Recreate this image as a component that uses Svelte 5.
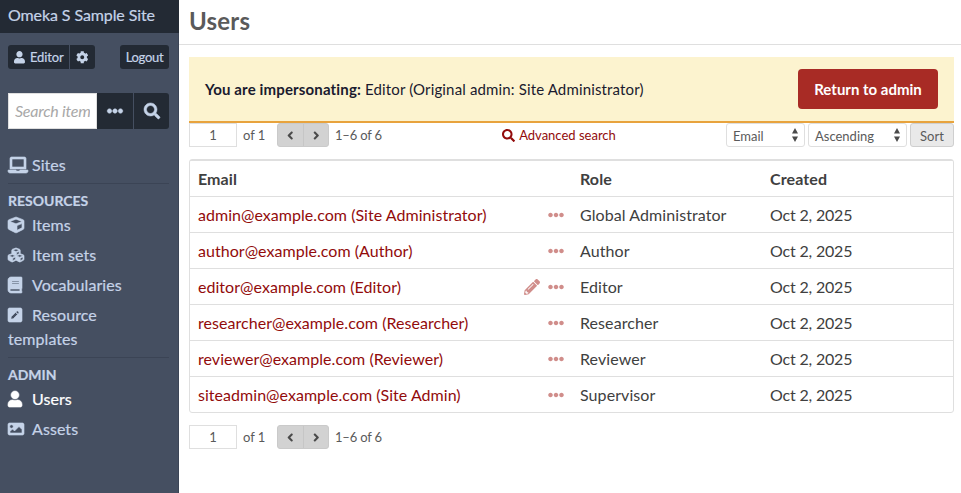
<script>
  const icons = {
    user: [448, 'M224 256c70.7 0 128-57.3 128-128S294.7 0 224 0 96 57.3 96 128s57.3 128 128 128zm89.6 32h-16.7c-22.2 10.2-46.9 16-72.9 16s-50.6-5.8-72.9-16h-16.7C60.2 288 0 348.2 0 422.4V464c0 26.5 21.5 48 48 48h352c26.5 0 48-21.5 48-48v-41.6c0-74.2-60.2-134.4-134.4-134.4z'],
    cog: [512, 'M487.4 315.7l-42.6-24.6c4.3-23.2 4.3-47 0-70.2l42.6-24.6c4.9-2.8 7.1-8.6 5.5-14-11.1-35.6-30-67.8-54.7-94.6-3.8-4.1-10-5.1-14.8-2.3L380.8 110c-17.9-15.4-38.5-27.3-60.8-35.1V25.8c0-5.6-3.9-10.5-9.4-11.7-36.7-8.2-74.3-7.8-109.2 0-5.5 1.2-9.4 6.1-9.4 11.7V75c-22.2 7.9-42.8 19.8-60.8 35.1L88.7 85.5c-4.9-2.8-11-1.9-14.8 2.3-24.7 26.7-43.6 58.9-54.7 94.6-1.7 5.4.6 11.2 5.5 14L67.3 221c-4.3 23.2-4.3 47 0 70.2l-42.6 24.6c-4.9 2.8-7.1 8.6-5.5 14 11.1 35.6 30 67.8 54.7 94.6 3.8 4.1 10 5.1 14.8 2.3l42.6-24.6c17.9 15.4 38.5 27.3 60.8 35.1v49.2c0 5.6 3.9 10.5 9.4 11.7 36.7 8.2 74.3 7.8 109.2 0 5.5-1.2 9.4-6.1 9.4-11.7v-49.2c22.2-7.9 42.8-19.8 60.8-35.1l42.6 24.6c4.9 2.8 11 1.9 14.8-2.3 24.7-26.7 43.6-58.9 54.7-94.6 1.5-5.5-.7-11.3-5.6-14.1zM256 336c-44.1 0-80-35.9-80-80s35.9-80 80-80 80 35.9 80 80-35.9 80-80 80z'],
    search: [512, 'M505 442.7L405.3 343c-4.5-4.5-10.6-7-17-7H372c27.6-35.3 44-79.7 44-128C416 93.1 322.9 0 208 0S0 93.1 0 208s93.1 208 208 208c48.3 0 92.7-16.4 128-44v16.3c0 6.4 2.5 12.5 7 17l99.7 99.7c9.4 9.4 24.6 9.4 33.9 0l28.3-28.3c9.4-9.4 9.4-24.6.1-34zM208 336c-70.7 0-128-57.2-128-128 0-70.7 57.2-128 128-128 70.7 0 128 57.2 128 128 0 70.7-57.2 128-128 128z'],
    dots: [512, 'M328 256c0 39.8-32.2 72-72 72s-72-32.2-72-72 32.2-72 72-72 72 32.2 72 72zm104-72c-39.8 0-72 32.2-72 72s32.2 72 72 72 72-32.2 72-72-32.2-72-72-72zm-352 0c-39.8 0-72 32.2-72 72s32.2 72 72 72 72-32.2 72-72-32.2-72-72-72z'],
    laptop: [640, 'M624 416H381.54c-.74 19.81-14.71 32-32.74 32H288c-18.69 0-33.02-17.47-32.77-32H16c-8.8 0-16 7.2-16 16v16c0 35.2 28.8 64 64 64h512c35.2 0 64-28.8 64-64v-16c0-8.8-7.2-16-16-16zM576 48c0-26.4-21.6-48-48-48H112C85.6 0 64 21.6 64 48v336h512V48zm-64 272H128V64h384v256z'],
    cube: [512, 'M239.1 6.3l-208 78c-18.7 7-31.1 25-31.1 45v225.1c0 18.2 10.3 34.8 26.5 42.9l208 104c13.5 6.8 29.4 6.8 42.9 0l208-104c16.3-8.1 26.5-24.8 26.5-42.9V129.3c0-20-12.4-37.9-31.1-44.9l-208-78C262 2.2 250 2.2 239.1 6.3zM256 68.4l192 72v1.1l-192 78-192-78v-1.1l192-72zm32 356V275.5l160-65v133.9l-160 80z'],
    cubes: [512, 'M488.6 250.2L392 214V105.5c0-15-9.3-28.4-23.4-33.7l-100-37.5c-8.1-3.1-17.1-3.1-25.3 0l-100 37.5c-14.1 5.3-23.4 18.7-23.4 33.7V214l-96.6 36.2C9.3 255.5 0 268.9 0 283.9V394c0 13.6 7.7 26.1 19.9 32.2l100 50c10.1 5.1 22.1 5.1 32.2 0l103.9-52 103.9 52c10.1 5.1 22.1 5.1 32.2 0l100-50c12.2-6.1 19.9-18.6 19.9-32.2V283.9c0-15-9.3-28.4-23.4-33.7zM358 214.8l-85 31.9v-68.2l85-37v73.3zM154 104.1l102-38.2 102 38.2v.6l-102 41.4-102-41.4v-.6zm84 291.1l-85 42.5v-79.1l85-38.8v75.4zm0-112l-102 41.4-102-41.4v-.6l102-38.2 102 38.2v.6zm240 112l-85 42.5v-79.1l85-38.8v75.4zm0-112l-102 41.4-102-41.4v-.6l102-38.2 102 38.2v.6z'],
    book: [448, 'M448 360V24c0-13.3-10.7-24-24-24H96C43 0 0 43 0 96v320c0 53 43 96 96 96h328c13.3 0 24-10.7 24-24v-16c0-7.5-3.5-14.3-8.9-18.7-4.2-15.4-4.2-59.3 0-74.7 5.4-4.3 8.9-11.1 8.9-18.6zM128 134c0-3.3 2.7-6 6-6h212c3.3 0 6 2.7 6 6v20c0 3.3-2.7 6-6 6H134c-3.3 0-6-2.7-6-6v-20zm0 64c0-3.3 2.7-6 6-6h212c3.3 0 6 2.7 6 6v20c0 3.3-2.7 6-6 6H134c-3.3 0-6-2.7-6-6v-20zm253.4 250H96c-17.7 0-32-14.3-32-32 0-17.6 14.4-32 32-32h285.4c-1.9 17.1-1.9 46.9 0 64z'],
    penSquare: [448, 'M400 480H48c-26.5 0-48-21.5-48-48V80c0-26.5 21.5-48 48-48h352c26.5 0 48 21.5 48 48v352c0 26.5-21.5 48-48 48zM238.1 177.9L102.4 313.6l-6.3 57.1c-.8 7.6 5.6 14.1 13.3 13.3l57.1-6.3L302.2 242c2.3-2.3 2.3-6.1 0-8.5L246.7 178c-2.5-2.4-6.3-2.4-8.6-.1zM345 165.1L314.9 135c-9.4-9.4-24.6-9.4-33.9 0l-23.1 23.1c-2.3 2.3-2.3 6.1 0 8.5l55.5 55.5c2.3 2.3 6.1 2.3 8.5 0L345 199c9.3-9.3 9.3-24.5 0-33.9z'],
    image: [512, 'M464 448H48c-26.51 0-48-21.49-48-48V112c0-26.51 21.49-48 48-48h416c26.51 0 48 21.49 48 48v288c0 26.51-21.49 48-48 48zM112 120c-30.928 0-56 25.072-56 56s25.072 56 56 56 56-25.072 56-56-25.072-56-56-56zM64 384h384V272l-87.515-87.515c-4.686-4.686-12.284-4.686-16.971 0L208 320l-55.515-55.515c-4.686-4.686-12.284-4.686-16.971 0L64 336v48z'],
    pencil: [512, 'M497.9 142.1l-46.1 46.1c-4.7 4.7-12.3 4.7-17 0l-111-111c-4.7-4.7-4.7-12.3 0-17l46.1-46.1c18.7-18.7 49.1-18.7 67.9 0l60.1 60.1c18.8 18.7 18.8 49.1 0 67.9zM284.2 99.8L21.6 362.4.4 483.9c-2.9 16.4 11.4 30.6 27.8 27.8l121.5-21.3 262.6-262.6c4.7-4.7 4.7-12.3 0-17l-111-111c-4.8-4.7-12.4-4.7-17.1 0zM124.1 339.9c-5.5-5.5-5.5-14.3 0-19.8l154-154c5.5-5.5 14.3-5.5 19.8 0s5.5 14.3 0 19.8l-154 154c-5.5 5.5-14.3 5.5-19.8 0zM88 424h48v36.3l-64.5 11.3-31.1-31.1L51.7 376H88v48z'],
    left: [256, 'M31.7 239l136-136c9.4-9.4 24.6-9.4 33.9 0l22.6 22.6c9.4 9.4 9.4 24.6 0 33.9L127.9 256l96.4 96.4c9.4 9.4 9.4 24.6 0 33.9L201.7 409c-9.4 9.4-24.6 9.4-33.9 0l-136-136c-9.5-9.4-9.5-24.6-.1-34z'],
    right: [256, 'M224.3 273l-136 136c-9.4 9.4-24.6 9.4-33.9 0l-22.6-22.6c-9.4-9.4-9.4-24.6 0-33.9l96.4-96.4-96.4-96.4c-9.4-9.4-9.4-24.6 0-33.9L54.3 103c9.4-9.4 24.6-9.4 33.9 0l136 136c9.5 9.4 9.5 24.6.1 34z'],
  };

  const resources = [
    ['cube', 'Items'],
    ['cubes', 'Item sets'],
    ['book', 'Vocabularies'],
    ['penSquare', 'Resource templates'],
  ];

  const users = [
    ['admin@example.com (Site Administrator)', 'Global Administrator', false],
    ['author@example.com (Author)', 'Author', false],
    ['editor@example.com (Editor)', 'Editor', true],
    ['researcher@example.com (Researcher)', 'Researcher', false],
    ['reviewer@example.com (Reviewer)', 'Reviewer', false],
    ['siteadmin@example.com (Site Admin)', 'Supervisor', false],
  ];
</script>

{#snippet icon(name)}
  <svg class="icon" viewBox="0 0 {icons[name][0]} 512" style:width="{icons[name][0] / 512}em" aria-hidden="true"><path d={icons[name][1]} /></svg>
{/snippet}

{#snippet link(name, label, active)}
  <a class="nav-link" class:active href="#/"><span class="nav-icon">{@render icon(name)}</span>{label}</a>
{/snippet}

{#snippet pagination()}
  <div class="pagination">
    <input class="page" type="text" value="1" aria-label="Page" />
    <span class="of">of 1</span>
    <span class="arrows">
      <span>{@render icon('left')}</span>
      <span>{@render icon('right')}</span>
    </span>
    <span class="count">1–6 of 6</span>
  </div>
{/snippet}

{#snippet select(label, cls)}
  <span class="select {cls}">{label}
    <svg width="6" height="14" viewBox="0 0 6 14" aria-hidden="true"><path d="M3 0L6 5.4H0zM3 14L0 8.6H6z" /></svg>
  </span>
{/snippet}

<div class="app">
  <aside>
    <div class="site">Omeka S Sample Site</div>
    <div class="account">
      <a class="dark who" href="#/">{@render icon('user')}Editor</a>
      <a class="dark gear" href="#/">{@render icon('cog')}</a>
      <a class="dark logout" href="#/">Logout</a>
    </div>
    <form class="search">
      <input type="text" placeholder="Search items" aria-label="Search items" />
      <button type="button" class="more" aria-label="Options">{@render icon('dots')}</button>
      <button type="button" class="go" aria-label="Search">{@render icon('search')}</button>
    </form>
    <nav>
      <div class="group">{@render link('laptop', 'Sites', false)}</div>
      <div class="group">
        <h4>RESOURCES</h4>
        {#each resources as [name, label]}{@render link(name, label, false)}{/each}
      </div>
      <div class="group">
        <h4>ADMIN</h4>
        {@render link('user', 'Users', true)}
        {@render link('image', 'Assets', false)}
      </div>
    </nav>
  </aside>

  <main>
    <h1>Users</h1>
    <div class="content">
      <div class="banner">
        <span><b>You are impersonating:</b> Editor (Original admin: Site Administrator)</span>
        <a class="return" href="#/">Return to admin</a>
      </div>
      <div class="controls">
        {@render pagination()}
        <a class="advanced" href="#/">{@render icon('search')}Advanced search</a>
        <div class="sorting">
          {@render select('Email', 'by')}
          {@render select('Ascending', 'order')}
          <button type="button">Sort</button>
        </div>
      </div>
      <div class="table">
        <div class="row head"><span>Email</span><span>Role</span><span>Created</span></div>
        {#each users as [email, role, editable]}
          <div class="row">
            <span class="email">
              <a href="#/">{email}</a>
              <span class="actions">{#if editable}{@render icon('pencil')}{/if}{@render icon('dots')}</span>
            </span>
            <span class="role">{role}</span>
            <span class="date">Oct 2, 2025</span>
          </div>
        {/each}
      </div>
      {@render pagination()}
    </div>
  </main>
</div>

<style>
  :global(body) { margin: 0; background: #fff; }
  .app {
    display: flex;
    width: 961px;
    height: 493px;
    overflow: hidden;
    font: 16px/24px Lato, "Open Sans", sans-serif;
    color: #404040;
  }
  .app :global(*) { box-sizing: border-box; }
  a { color: #920b0b; text-decoration: none; }
  input, button { font: inherit; margin: 0; border-radius: 0; outline: 0; }
  .icon { height: 1em; fill: currentColor; display: block; flex: none; overflow: visible; }

  aside { width: 179px; flex: none; background: #454f61; color: #c5d3e8; border-right: 1px solid #3c4556; -webkit-text-stroke: 0.2px currentColor; }
  .site { height: 33px; padding: 3px 8px 0; background: #232a34; margin-right: -1px; white-space: nowrap; letter-spacing: -0.1px; }
  .account { display: flex; padding: 12px 9px 0 8px; font-size: 13px; }
  .dark { height: 24px; display: flex; align-items: center; background: #232a34; color: #c5d3e8; }
  .who { width: 62px; padding-left: 6px; gap: 5px; border-radius: 3px 0 0 3px; border-right: 1px solid #454f61; letter-spacing: -0.1px; }
  .gear { width: 25px; justify-content: center; border-radius: 0 3px 3px 0; }
  .logout { width: 49px; justify-content: center; border-radius: 3px; margin-left: auto; letter-spacing: -0.3px; }
  .who .icon, .gear .icon { font-size: 12.5px; }
  .search { display: flex; margin: 24px 9px 0 8px; height: 36px; }
  .search input { width: 89px; border: 1px solid #dfdfdf; padding: 0 6px; background: #fff; letter-spacing: -0.22px; }
  .search input::placeholder { color: #a8a8a8; font-style: italic; opacity: 1; -webkit-text-stroke: 0; }
  .search button { border: 0; padding: 0; background: #232a34; color: #c5d3e8; display: flex; align-items: center; justify-content: center; }
  .search .more { width: 36px; }
  .search .go { width: 36px; border-left: 1px solid #454f61; border-radius: 0 3px 3px 0; }
  .search .icon { stroke: currentColor; stroke-width: 16; }
  nav { margin: 21px 9px 0 8px; }
  .group { padding-bottom: 3px; border-bottom: 1px solid #3b4455; }
  .group + .group { padding-top: 5px; }
  .group:last-child { border: 0; }
  h4 { margin: 0; font-size: 14px; line-height: 24px; font-weight: 700; }
  .nav-link { display: block; padding: 3px 0; color: inherit; letter-spacing: 0.07px; }
  .group h4 + .nav-link { padding-top: 0; }
  .nav-link.active { color: #fff; }
  .nav-icon { display: inline-block; width: 24px; height: 16px; vertical-align: -2px; }
  .nav-icon .icon { stroke: currentColor; stroke-width: 20; }

  main { flex: 1; min-width: 0; }
  h1 { margin: 0; height: 45px; padding: 3px 0 0 10px; font-size: 24px; line-height: 36px; font-weight: 700; letter-spacing: 0.2px; color: #5a5a5a; border-bottom: 1px solid #dfdfdf; }
  .content { padding: 12px 7px 0 10px; }
  .banner { height: 66px; display: flex; align-items: center; justify-content: space-between; padding: 0 16px; background: #fcf3cf; border-bottom: 2px solid #e8a33d; color: #1a1a2e; font-size: 15px; }
  .banner > span { letter-spacing: 0.15px; }
  .return { height: 40px; width: 140px; display: flex; align-items: center; justify-content: center; background: #a82b25; color: #fff; border-radius: 4px; font-weight: 700; }
  .controls { display: flex; justify-content: space-between; height: 36px; color: #5a5a5a; }
  .pagination { display: flex; height: 24px; font-size: 13px; color: #5a5a5a; width: 196px; white-space: nowrap; }
  .page { width: 48px; border: 1px solid #dfdfdf; text-align: center; padding: 0; color: #5a5a5a; background: #fff; }
  .of { margin-left: 6px; width: 34px; }
  .arrows { display: flex; width: 52px; background: #d2d2d2; border: 1px solid #cacaca; border-radius: 3px; color: #4a4a4a; }
  .arrows > span { width: 50%; display: flex; align-items: center; justify-content: center; }
  .arrows > span + span { border-left: 1px solid #c6c6c6; }
  .count { margin-left: 6px; letter-spacing: -0.2px; }
  .advanced { display: flex; align-items: center; gap: 4px; height: 24px; font-size: 13px; margin-left: 7px; }
  .sorting { display: flex; font-size: 13px; height: 24px; }
  .select { display: flex; align-items: center; justify-content: space-between; border: 1px solid #dfdfdf; border-radius: 3px; padding: 2px 6px 0; }
  .select svg { fill: #4a4a4a; margin-top: -2px; }
  .by { width: 79px; margin-right: 3px; }
  .order { width: 99px; margin-right: 3px; }
  .sorting button { width: 44px; padding: 0; border: 1px solid #cfcfcf; border-radius: 3px; background: #e9e9e9; color: #5a5a5a; }
  .table { border: 1px solid #dfdfdf; border-radius: 3px; margin-bottom: 12px; }
  .row { display: grid; grid-template-columns: 382px 190px 1fr; height: 36px; line-height: 35px; padding-left: 8px; border-top: 1px solid #dfdfdf; }
  .head { font-weight: 700; letter-spacing: 0.1px; }
  .email { display: flex; justify-content: space-between; padding-right: 16px; }
  .email a { letter-spacing: 0.04px; }
  .role { letter-spacing: 0.08px; }
  .date { letter-spacing: -0.18px; }
  .actions { display: flex; gap: 8px; align-items: center; color: #d08d8a; }
</style>
